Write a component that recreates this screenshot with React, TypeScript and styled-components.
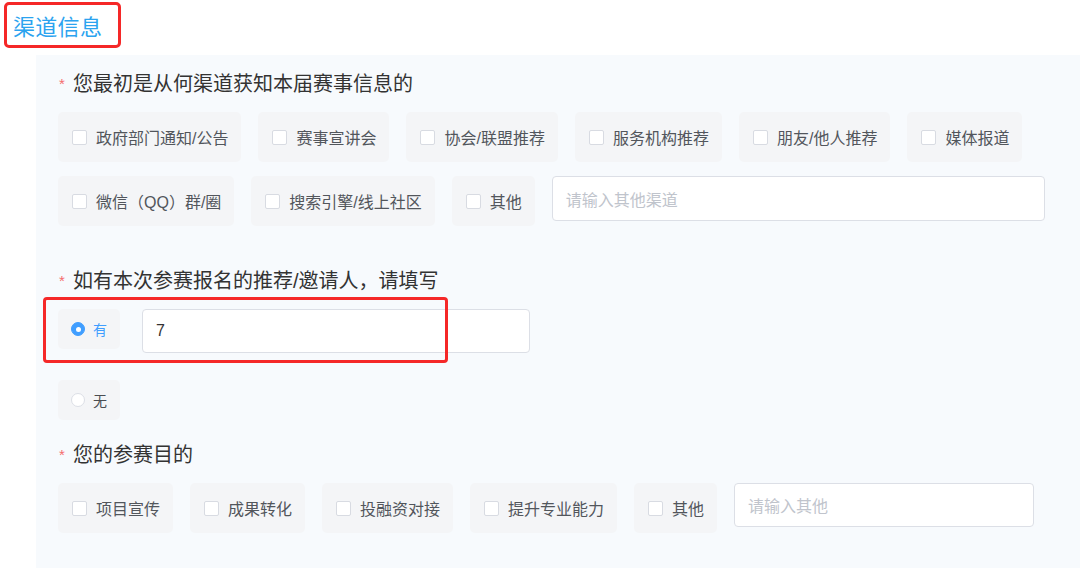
import styled, { createGlobalStyle } from 'styled-components'

const GlobalStyle = createGlobalStyle`
  html, body {
    margin: 0;
    padding: 0;
    background: #ffffff;
  }
  body {
    font-family: "Liberation Sans", "Noto Sans CJK SC", sans-serif;
    color: #333333;
  }
`

const Page = styled.div`
  width: 1080px;
  height: 568px;
  overflow: hidden;
  padding: 2px 0 0 4px;
  box-sizing: border-box;
  display: flex;
  flex-direction: column;
`

const TitleBox = styled.div`
  align-self: flex-start;
  width: 117px;
  height: 46px;
  box-sizing: border-box;
  border: 3px solid #f52828;
  border-radius: 5px;
  padding: 0 0 0 6px;
  display: flex;
  align-items: center;
  font-size: 22px;
  color: #2ba3ef;
  letter-spacing: 0.3px;
`

const Panel = styled.div`
  flex: 1;
  margin: 7px 0 0 32px;
  padding: 15px 20px 0 22px;
  background: #f7fafd;
  display: flex;
  flex-direction: column;
`

const Question = styled.div<{ $top?: number }>`
  margin-top: ${(p) => p.$top ?? 0}px;
  height: 28px;
  line-height: 28px;
  font-size: 20px;
  color: #333333;
  display: flex;
  align-items: center;
`

const Star = styled.span`
  color: #f56c6c;
  font-size: 15px;
  width: 14px;
  margin-left: 1px;
`

const OptionWrap = styled.div`
  margin-top: 14px;
  display: flex;
  flex-wrap: wrap;
  column-gap: 17px;
  row-gap: 14px;
  align-items: flex-start;
`

const Option = styled.label`
  height: 50px;
  padding: 0 13px 0 14px;
  background: #f4f5f7;
  border-radius: 5px;
  display: flex;
  align-items: center;
  gap: 9px;
  font-size: 16px;
  color: #52565c;
  white-space: nowrap;
  box-sizing: border-box;
`

const Box = styled.span`
  width: 15px;
  height: 15px;
  box-sizing: border-box;
  border: 1px solid #d8dbe2;
  border-radius: 2px;
  background: #ffffff;
  flex: none;
`

const TextInput = styled.div<{ $w: number; $h?: number; $filled?: boolean }>`
  width: ${(p) => p.$w}px;
  height: ${(p) => p.$h ?? 44}px;
  box-sizing: border-box;
  border: 1px solid #dcdfe6;
  border-radius: 4px;
  background: #ffffff;
  padding: 0 13px;
  display: flex;
  align-items: center;
  font-size: 16px;
  color: ${(p) => (p.$filled ? '#333333' : '#c0c4cc')};
`

const RadioRow = styled.div<{ $top: number }>`
  position: relative;
  margin-top: ${(p) => p.$top}px;
  display: flex;
  align-items: flex-start;
  gap: 22px;
`

const RadioItem = styled.label<{ $checked?: boolean }>`
  width: 62px;
  height: 40px;
  box-sizing: border-box;
  padding-left: 13px;
  background: #f4f5f7;
  border-radius: 5px;
  display: flex;
  align-items: center;
  gap: 8px;
  font-size: 14px;
  color: ${(p) => (p.$checked ? '#409eff' : '#4a4d52')};
`

const Dot = styled.span<{ $checked?: boolean }>`
  width: 14px;
  height: 14px;
  box-sizing: border-box;
  border-radius: 50%;
  flex: none;
  border: 1px solid ${(p) => (p.$checked ? '#409eff' : '#dcdfe6')};
  background: ${(p) => (p.$checked ? '#409eff' : '#ffffff')};
  display: flex;
  align-items: center;
  justify-content: center;
  &::after {
    content: '';
    width: 5px;
    height: 5px;
    border-radius: 50%;
    background: #ffffff;
    display: ${(p) => (p.$checked ? 'block' : 'none')};
  }
`

const Highlight = styled.div`
  position: absolute;
  left: -15px;
  top: -12px;
  width: 405px;
  height: 66px;
  box-sizing: border-box;
  border: 3px solid #f52828;
  border-radius: 4px;
  pointer-events: none;
`

const channels = ['政府部门通知/公告', '赛事宣讲会', '协会/联盟推荐', '服务机构推荐', '朋友/他人推荐', '媒体报道', '微信（QQ）群/圈', '搜索引擎/线上社区', '其他']
const purposes = ['项目宣传', '成果转化', '投融资对接', '提升专业能力', '其他']

const App: React.FC = () => {
  return (
    <Page>
      <GlobalStyle />
      <TitleBox>渠道信息</TitleBox>
      <Panel>
        <Question>
          <Star>*</Star>您最初是从何渠道获知本届赛事信息的
        </Question>
        <OptionWrap>
          {channels.map((c) => (
            <Option key={c}>
              <Box />
              {c}
            </Option>
          ))}
          <TextInput $w={493} $h={45}>请输入其他渠道</TextInput>
        </OptionWrap>

        <Question $top={41}>
          <Star>*</Star>如有本次参赛报名的推荐/邀请人，请填写
        </Question>
        <RadioRow $top={14}>
          <RadioItem $checked>
            <Dot $checked />有
          </RadioItem>
          <TextInput $w={388} $filled>7</TextInput>
          <Highlight />
        </RadioRow>
        <RadioRow $top={27}>
          <RadioItem>
            <Dot />无
          </RadioItem>
        </RadioRow>

        <Question $top={21}>
          <Star>*</Star>您的参赛目的
        </Question>
        <OptionWrap>
          {purposes.map((c) => (
            <Option key={c}>
              <Box />
              {c}
            </Option>
          ))}
          <TextInput $w={300}>请输入其他</TextInput>
        </OptionWrap>
      </Panel>
    </Page>
  )
}

export default App
